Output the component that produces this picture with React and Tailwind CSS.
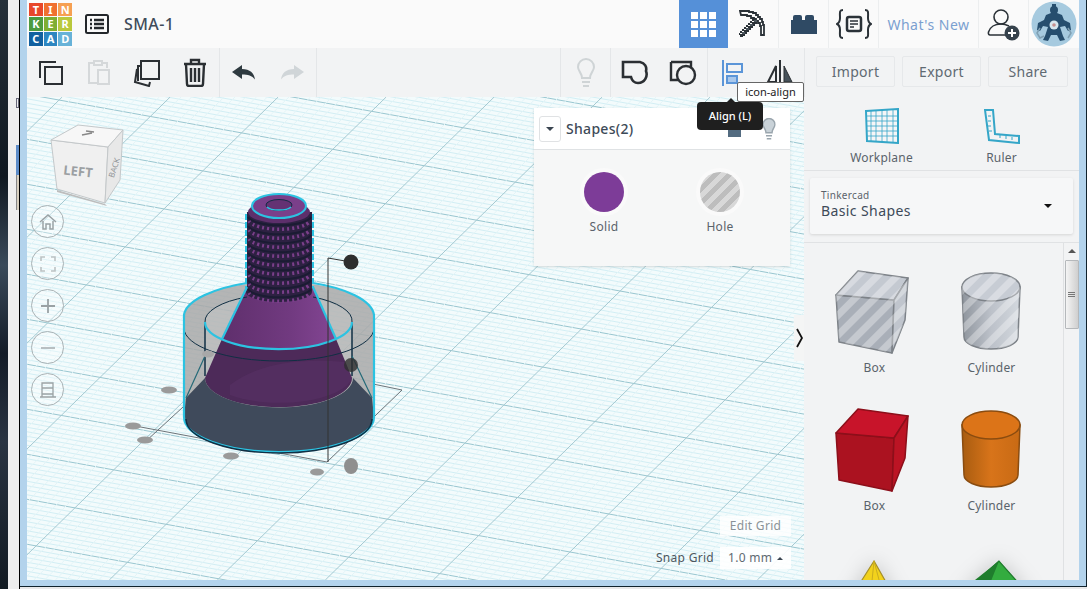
import React from 'react';

const range = (a, b) => Array.from({ length: b - a + 1 }, (_, i) => a + i);

const LOGO = [
      ['T', 'bg-[#e8472a]'], ['I', 'bg-[#f0702f]'], ['N', 'bg-[#f6a052]'],
      ['K', 'bg-[#4c9a3f]'], ['E', 'bg-[#7fae33]'], ['R', 'bg-[#b9c83c]'],
      ['C', 'bg-[#12609f]'], ['A', 'bg-[#2d86c1]'], ['D', 'bg-[#67b2d8]'],
];

const Logo = () => (
      <div className="grid grid-cols-3 gap-[1px] w-[43px] h-[43px] ml-[2px]">
            {LOGO.map(([l, c]) => (
                  <div key={l} className={`${c} flex items-center justify-center text-white text-[11px] font-bold leading-none`}>{l}</div>
            ))}
      </div>
);

const Tool = ({ children, className = 'w-12' }) => (
      <div className={`${className} h-full flex items-center justify-center shrink-0`}>{children}</div>
);

const stroke = { fill: 'none', stroke: '#2b2f33', strokeWidth: 2 };

const CopyIcon = () => (
      <svg width="26" height="26" viewBox="0 0 26 26"><path {...stroke} d="M2 18V2h16M7 7h17v17H7z" /></svg>
);
const PasteIcon = () => (
      <svg width="24" height="28" viewBox="0 0 24 28"><g fill="none" stroke="#d5d8da" strokeWidth="2"><path d="M7 4H2v20h8M15 4h5v5M7 2h8v4H7zM11 11h11v14H11z" /></g></svg>
);
const DupIcon = () => (
      <svg width="28" height="28" viewBox="0 0 28 28"><path {...stroke} d="M8 2h18v18H8z" /><path {...stroke} d="M8 7H5v15M4 10l-2 13 14 4 1-4" /></svg>
);
const TrashIcon = () => (
      <svg width="24" height="29" viewBox="0 0 24 29"><path fill="none" stroke="#2b2f33" strokeWidth="2.4" d="M1 6h22M8 5V2h8v3M3 6l1 20q0 2 2 2h12q2 0 2-2l1-20M8 10v14M12 10v14M16 10v14" /></svg>
);
const UndoIcon = ({ c = '#2f3a40', flip }) => (
      <svg width="24" height="16" viewBox="0 0 24 16" className={flip ? '-scale-x-100' : ''}><path fill={c} d="M10 0L0 7l10 7V9.500c6 0 10 1 13 5 -1-7-5-10-13-10.500z" /></svg>
);
const Bulb = ({ c = '#cfd4d6', fill = 'none' }) => (
      <svg width="18" height="30" viewBox="0 0 18 30"><path fill={fill} stroke={c} strokeWidth="2" d="M9 1a8 8 0 0 0-8 8c0 4 4 6 4 11h8c0-5 4-7 4-11a8 8 0 0 0-8-8z" /><path stroke={c} strokeWidth="2" d="M5 24h8M6 28h6" /></svg>
);
const GroupIcon = () => (
      <svg width="28" height="26" viewBox="0 0 28 26"><path fill="none" stroke="#2b2f33" strokeWidth="2.600" d="M2 2h17c5 1 7 5 6 9 2 5-1 12-8 12-4 0-6-2-7-6H2z" /></svg>
);
const HoleIcon = () => (
      <svg width="28" height="26" viewBox="0 0 28 26"><path fill="none" stroke="#2b2f33" strokeWidth="2.400" d="M2 2h20v6M2 2v18h7" /><circle cx="17" cy="15" r="9" fill="none" stroke="#2b2f33" strokeWidth="2.400" /></svg>
);
const AlignIcon = () => (
      <svg width="22" height="26" viewBox="0 0 22 26"><g fill="none" stroke="#5b95d8" strokeWidth="2"><path d="M2 0v26M6 4h15v8H6zM6 16h10v7H6z" /></g><path fill="#a9c8ec" d="M7 17h8v5H7z" /></svg>
);
const FlipIcon = () => (
      <svg width="28" height="24" viewBox="0 0 28 24" className="-mt-[2px]"><path fill="#2b2f33" d="M13 0h2v24h-2z" /><path fill="none" stroke="#2b2f33" strokeWidth="2" d="M10 6v16H2z" /><path fill="#47525a" stroke="#2b2f33" strokeWidth="1" d="M18 6v16h8z" /></svg>
);
const ListIcon = () => (
      <svg width="24" height="20" viewBox="0 0 24 20"><rect x="1" y="1" width="22" height="18" rx="1.500" fill="none" stroke="#23272b" strokeWidth="2" /><path stroke="#23272b" strokeWidth="2.400" d="M5 6h2M9 6h10M5 10h2M9 10h10M5 14h2M9 14h10" /></svg>
);
const GridIcon = () => (
      <svg width="25" height="25" viewBox="0 0 25 25"><path fill="#fff" d="M0 0h7v7H0zM9 0h7v7H9zM18 0h7v7h-7zM0 9h7v7H0zM9 9h7v7H9zM18 9h7v7h-7zM0 18h7v7H0zM9 18h7v7H9zM18 18h7v7h-7z" /></svg>
);
const PickIcon = () => (
      <svg width="28" height="30" viewBox="0 0 28 30">
            <path fill="none" stroke="#2b3238" strokeWidth="1.800" d="M1 2h9v1h4v1h3v2h2v2h2v2h2v3h1v3h1v10h-3v-9h-1v-3h-2v-2h-2v-2h-2v-1h-3v-2h-4v-1h-6z" />
            {range(0, 7).map(i => (
                  <rect key={i} x={15 - i * 2} y={11 + i * 2} width="3" height="3" fill={i % 2 ? '#2b3238' : '#4a545c'} />
            ))}
            {range(0, 7).map(i => (
                  <rect key={i} x={13 - i * 2} y={10 + i * 2} width="2" height="2" fill="#2b3238" />
            ))}
            {range(0, 6).map(i => (
                  <rect key={i} x={16 - i * 2} y={13 + i * 2} width="2" height="2" fill="#2b3238" />
            ))}
      </svg>
);
const BrickIcon = () => (
      <svg width="26" height="20" viewBox="0 0 26 20"><path fill="#2f4a64" d="M0 20V6h2V3q0-2 2-2h5q2 0 2 2v3h3V3q0-2 2-2h5q2 0 2 2v3h3v14z" /></svg>
);
const CodeIcon = () => (
      <svg width="36" height="30" viewBox="0 0 36 30"><g fill="none" stroke="#2b3238" strokeWidth="2"><path d="M7 1C3 1 4 4 4 9c0 4-1 5-3 6 2 1 3 2 3 6 0 5-1 8 3 8M29 1c4 0 3 3 3 8 0 4 1 5 3 6-2 1-3 2-3 6 0 5 1 8-3 8" /><rect x="11" y="8" width="14" height="14" rx="2" strokeWidth="2.500" /></g><path stroke="#2b3238" strokeWidth="1.600" d="M14 12h8M14 15h8M14 18h4" /></svg>
);
const UserAdd = () => (
      <svg width="34" height="34" viewBox="0 0 34 34"><g fill="none" stroke="#2b3238" strokeWidth="1.600"><circle cx="14" cy="10" r="7" /><path d="M20 28H3c-1 0-2-1-1.500-3C3 20 8 17 14 17c3 0 6 1 8 2" /></g><circle cx="25" cy="26" r="7.500" fill="#36424c" /><path stroke="#fff" strokeWidth="2" d="M25 22v8M21 26h8" /></svg>
);
const Avatar = () => (
      <svg width="46" height="46" viewBox="0 0 46 46">
            <circle cx="23" cy="23" r="22.500" fill="#a6cadf" />
            <g fill="#264e6e">
                  <circle cx="23" cy="9" r="4" />
                  <path d="M21 3h4v4h-4zM15 14l5-2h6l5 2 2 5 6 3 1 7-3 1-3-5-5 1 3 9 2 4-5 1-3-6h-6l-3 6-5-1 2-4 3-9-5-1-3 5-3-1 1-7 6-3z" />
            </g>
            <path d="M9 27l-3 5 3 5 4-2M37 27l3 5-3 5" fill="none" stroke="#7f9fb2" strokeWidth="1.500" />
            <circle cx="23" cy="24" r="4.500" fill="#d7e6ee" />
            <circle cx="23" cy="24" r="1.800" fill="#c58f8f" />
      </svg>
);

const Grid3d = () => (
      <g strokeWidth="1">
            {range(-70, 110).map(k => (
                  <line key={k} x1="27" x2="804" y1={300 + 0.18 * (27 - 420) + k * 4.5} y2={300 + 0.18 * (804 - 420) + k * 4.5}
                        stroke={k % 10 === 0 ? '#98c6d0' : '#d2eef4'} />
            ))}
            {range(-60, 90).map(k => (
                  <line key={k} x1={452 + 253 / 0.98 + k * 10.8} y1="97" x2={452 - 230 / 0.98 + k * 10.8} y2="580"
                        stroke={k % 10 === 0 ? '#a5c9d1' : '#e3f4f7'} />
            ))}
      </g>
);

const Cube = () => (
      <g>
            <path d="M57 190l48 14 2 2-50-14z" fill="#bdbdbd" />
            <path d="M51 140l57 7-3 56-48-14z" fill="#f0f0f0" stroke="#c4c8ca" />
            <path d="M51 140l27-15 45 5-15 17z" fill="#f7f7f7" stroke="#c4c8ca" />
            <path d="M108 147l15-17-3 50-15 23z" fill="#e8e8e8" stroke="#c4c8ca" />
            <text x="78" y="176" textAnchor="middle" fontSize="13" fontWeight="700" fill="#9b9fa2" transform="rotate(6 78 172)">LEFT</text>
            <text x="115" y="170" textAnchor="middle" fontSize="8" fill="#8f9396" transform="rotate(-72 115 168)">BACK</text>
            <path d="M82 135l10-2M86 131l8 1" stroke="#888" strokeWidth="1.500" />
      </g>
);

const Model = () => (
      <g>
            <defs>
                  <linearGradient id="cone" x1="0" x2="1" y1="0" y2="0">
                        <stop offset="0" stopColor="#5f2f6c" /><stop offset="0.6" stopColor="#713a80" /><stop offset="1" stopColor="#844694" />
                  </linearGradient>
            </defs>
            {/* bounding box and handles */}
            <path d="M130 425L327 462L402 390L373 384M145 442L183 407" fill="none" stroke="#6b7378" strokeWidth="1" />
            {[[169, 390, 8, 3.500], [133, 426, 8, 3.500], [145, 440, 8, 3.500], [231, 456, 8, 3.500], [317, 472, 7, 3.500]].map(([x, y, a, b]) => (
                  <ellipse key={x} cx={x} cy={y} rx={a} ry={b} fill="#9a9a9a" />
            ))}
            <ellipse cx="351" cy="466" rx="7" ry="8" fill="#8f8f8f" />

            <path d="M184 315A95 33 0 0 1 374 315L374 417A95 35 0 0 1 184 417Z" fill="#a8a8a8" fillOpacity="0.85" />
            <path d="M205 322A73 27 0 0 1 352 322L352 375A73 27 0 0 1 205 375Z" fill="#d7dcdd" fillOpacity="0.25" />
            <path d="M247 287L313 287L336 339L222 339Z" fill="url(#cone)" />
            <path d="M222 339A73 27 0 0 0 336 339Z" fill="url(#cone)" />
            <path d="M222 339A73 27 0 0 0 336 339L352 378A73 29 0 0 1 205 378Z" fill="#4d2a59" />
            <path d="M230 385Q270 355 345 362L352 378A73 29 0 0 1 230 395Z" fill="#5a3166" fillOpacity="0.55" />
            <path d="M186 398L205 378A73 29 0 0 0 353 378L372 398L374 417A95 35 0 0 1 184 417Z" fill="#3f4a5b" />

            <ellipse cx="279" cy="292" rx="33" ry="10" fill="#2d2142" />
            <rect x="247" y="212" width="65" height="80" fill="#2d2142" />
            {range(0, 8).map(i => (
                  <g key={i} fill="none">
                        <path d={`M248 ${217 + i * 9}A32 10 0 0 0 311 ${217 + i * 9}`} stroke="#1b1c33" strokeWidth="2" />
                        <path d={`M249 ${221 + i * 9}A31 10 0 0 0 310 ${221 + i * 9}`} stroke="#7a3f8a" strokeWidth="3.500" strokeDasharray="2 3" />
                  </g>
            ))}
            <path d="M246 214V288M313 214V288" stroke="#2cc3e2" strokeWidth="2" strokeDasharray="6 2" />
            <ellipse cx="279" cy="212" rx="31" ry="11" fill="#5d2f6b" />
            <ellipse cx="279" cy="206" rx="27" ry="12" fill="#7a3f8a" stroke="#2cc3e2" strokeWidth="2" />
            <ellipse cx="279" cy="205" rx="13" ry="5.500" fill="#643273" stroke="#132b45" strokeWidth="1" />
            <path d="M267 207A13 5 0 0 0 291 207" fill="none" stroke="#2cc3e2" strokeWidth="1.500" />

            {/* thin edges */}
            <g fill="none" stroke="#102f44" strokeWidth="1">
                  <path d="M205 322A73 27 0 0 1 247 297M313 297A73 27 0 0 1 352 322" />
                  <path d="M205 322V376M352 322V376" strokeWidth="1.500" />
                  <path d="M184 328A95 33 0 0 0 374 328" />
            </g>
            {/* selection outline */}
            <g fill="none" stroke="#2cc3e2" strokeWidth="2.200">
                  <path d="M184 417V315C186 300 215 288 247 283M313 283C345 288 372 300 374 315V417A95 35 0 0 1 184 417" />
                  <path d="M205 322A73 27 0 0 0 352 322" />
                  <path d="M247 287L222 339M313 287L336 339" />
                  <path d="M186 398L205 356M372 398L352 356" stroke="#256a78" strokeWidth="1.200" />
            </g>
            <path d="M186 419A93 34 0 0 0 372 419" fill="none" stroke="#102f44" strokeWidth="1.500" />

            {/* rotate handles */}
            <path d="M351 262L328 258V462" fill="none" stroke="#333" strokeWidth="1" />
            <circle cx="351" cy="262" r="7.500" fill="#2e2e2e" />
            <circle cx="351" cy="365" r="7" fill="#2e2e2e" fillOpacity="0.8" />
            <ellipse cx="208" cy="354" rx="6" ry="3.500" fill="#a8a8a8" />
      </g>
);

const Viewport = () => (
      <svg className="absolute inset-0 w-full h-full" viewBox="27 97 777 483">
            <rect x="27" y="97" width="777" height="483" fill="#f3fbfc" />
            <Grid3d />
            <Cube />
            <Model />
      </svg>
);

const NavBtn = ({ children }) => (
      <div className="w-[33px] h-[33px] rounded-full border border-[#a9b2b5] bg-white/30 flex items-center justify-center">{children}</div>
);

const NavIcons = () => (
      <div className="absolute left-[4px] top-[108px] flex flex-col gap-[9px]">
            <NavBtn>
                  <svg width="18" height="18" viewBox="0 0 18 18"><path fill="none" stroke="#9aa2a5" strokeWidth="1.500" d="M1 9l8-7 8 7M4 8v8h3v-5h4v5h3V8" /></svg>
            </NavBtn>
            <NavBtn>
                  <svg width="16" height="16" viewBox="0 0 16 16"><path fill="none" stroke="#bcc2c4" strokeWidth="1.600" d="M1 5V1h4M11 1h4v4M15 11v4h-4M5 15H1v-4" /></svg>
            </NavBtn>
            <NavBtn>
                  <svg width="14" height="14" viewBox="0 0 14 14"><path stroke="#9aa2a5" strokeWidth="1.800" d="M7 0v14M0 7h14" /></svg>
            </NavBtn>
            <NavBtn>
                  <svg width="14" height="14" viewBox="0 0 14 14"><path stroke="#b2b8bb" strokeWidth="1.800" d="M0 7h14" /></svg>
            </NavBtn>
            <NavBtn>
                  <svg width="16" height="18" viewBox="0 0 16 18"><path fill="none" stroke="#9aa2a5" strokeWidth="1.300" d="M2 2h11v11H2zM2 7h11M0 16h16M2 13v3M13 13v3" /></svg>
            </NavBtn>
      </div>
);

const ShapesPanel = () => (
      <div className="absolute left-[507px] top-[11px] w-[256px] h-[158px] bg-[#f6f7f7] shadow-sm">
            <div className="h-[42px] bg-white border-b border-[#dfe2e4] flex items-center pl-[5px]">
                  <div className="w-[22px] h-[26px] shrink-0 border border-[#e0e2e4] rounded-[3px] flex items-center justify-center">
                        <div className="w-0 h-0 border-x-[4px] border-x-transparent border-t-[4px] border-t-[#3a4550]" />
                  </div>
                  <span className="ml-[5px] text-[14px] font-medium text-[#3d4a58] tracking-[0.3px]">Shapes(2)</span>
                  <div className="ml-auto mr-[12px] flex items-center gap-[19px] mt-[4px]">
                        <div className="w-[13px] h-[13px] bg-[#536b80] shrink-0" />
                        <div className="shrink-0 scale-75 -mt-[4px]"><Bulb c="#9aa5ad" fill="#c9d2d8" /></div>
                  </div>
            </div>
            <div className="flex pt-[22px]">
                  <div className="w-[140px] flex flex-col items-center">
                        <div className="w-[40px] h-[40px] rounded-full bg-[#7d3c98] ring-4 ring-[#fafafa]" />
                        <span className="mt-[7px] text-[12px] leading-[16px] text-[#5a636b] tracking-[0.3px]">Solid</span>
                  </div>
                  <div className="w-[92px] flex flex-col items-center">
                        <div className="w-[40px] h-[40px] rounded-full ring-4 ring-[#fafafa] bg-[repeating-linear-gradient(135deg,#bdbdbd_0,#bdbdbd_5px,#d8d8d8_5px,#d8d8d8_10px)]" />
                        <span className="mt-[7px] text-[12px] leading-[16px] text-[#5a636b] tracking-[0.3px]">Hole</span>
                  </div>
            </div>
      </div>
);

const GridControls = () => (
      <div className="absolute left-[564px] top-[419px] w-[200px] flex flex-col items-end gap-[11px] text-[12px] text-[#5f6a72] tracking-[0.3px] whitespace-nowrap">
            <div className="w-[71px] h-[20px] bg-white/80 flex items-center justify-center text-[#8a9297]">Edit Grid</div>
            <div className="flex items-center">
                  <span className="mr-[6px] text-[#4d575e]">Snap Grid</span>
                  <div className="w-[71px] h-[22px] bg-white/90 flex items-center pl-[8px] text-[#5f6a72]">
                        1.0 mm
                        <div className="ml-[5px] w-0 h-0 border-x-[3px] border-x-transparent border-b-[3px] border-b-[#3a4550]" />
                  </div>
            </div>
      </div>
);

const ImportBtn = ({ label, w }) => (
      <div className={`${w} h-[31px] border border-[#e6e8ea] rounded-[2px] flex items-center justify-center text-[14px] text-[#5f6a72] tracking-[0.3px]`}>{label}</div>
);

const BoxShape = ({ top, front, side, edge, pattern }) => (
      <svg width="117" height="96" viewBox="816 265 117 96">
            <path d="M836 295l58 5-2 53-53-11z" fill={front} stroke={edge} strokeWidth="1.500" strokeLinejoin="round" />
            <path d="M836 295l22-24 50 7-14 22z" fill={top} stroke={edge} strokeWidth="1.500" strokeLinejoin="round" />
            <path d="M894 300l14-22-3 42-13 33z" fill={side} stroke={edge} strokeWidth="1.500" strokeLinejoin="round" />
            {pattern && <path d="M836 295l58 5-2 53-53-11zM836 295l22-24 50 7-14 22zM894 300l14-22-3 42-13 33z" fill="url(#hatch)" />}
      </svg>
);

const CylShape = ({ top, body, edge, pattern }) => (
      <svg width="117" height="96" viewBox="933 265 117 96">
            <defs>
                  <linearGradient id={`cyl${pattern ? 'g' : 'o'}`} x1="0" x2="1" y1="0" y2="0">
                        <stop offset="0" stopColor={body[0]} /><stop offset="0.5" stopColor={body[1]} /><stop offset="1" stopColor={body[2]} />
                  </linearGradient>
            </defs>
            <path d="M962 287L964 337A27 12 0 0 0 1018 337L1020 287Z" fill={`url(#cyl${pattern ? 'g' : 'o'})`} stroke={edge} strokeWidth="1.500" />
            <ellipse cx="991" cy="287" rx="29" ry="14" fill={top} stroke={edge} strokeWidth="1.500" />
            {pattern && <path d="M962 287L964 337A27 12 0 0 0 1018 337L1020 287A29 14 0 0 0 962 287Z" fill="url(#hatch)" />}
      </svg>
);

const Item = ({ label, children }) => (
      <div className="h-[138px] flex flex-col items-center">
            {children}
            <span className="text-[12px] leading-[14px] text-[#5a636b] tracking-[0.2px]">{label}</span>
      </div>
);

const Library = () => (
      <div className="flex-1 min-h-0 flex">
            <div className="flex-1 overflow-hidden pl-[12px] pt-[22px]">
                  <svg width="0" height="0" className="absolute">
                        <defs>
                              <pattern id="hatch" width="14" height="14" patternUnits="userSpaceOnUse" patternTransform="rotate(45)">
                                    <rect width="7" height="14" fill="#ffffff" fillOpacity="0.32" />
                              </pattern>
                        </defs>
                  </svg>
                  <div className="grid grid-cols-[117px_117px]">
                        <Item label="Box"><BoxShape top="#c4c9d1" front="#a9afb8" side="#c0c5cd" edge="#7d8288" pattern /></Item>
                        <Item label="Cylinder"><CylShape top="#c7ccd4" body={['#8f959d', '#bcc1c9', '#d3d8de']} edge="#7d8288" pattern /></Item>
                        <Item label="Box"><BoxShape top="#c8142a" front="#ab1220" side="#bc1424" edge="#8c0f1a" /></Item>
                        <Item label="Cylinder"><CylShape top="#dc7418" body={['#a85c10', '#d8741a', '#c86a14']} edge="#8a4c10" /></Item>
                        <div className="h-[96px] drop-shadow-[0_0_10px_rgba(0,0,0,0.18)]">
                              <svg width="117" height="96" viewBox="816 265 117 96">
                                    <path d="M874 285L836 345L908 345Z" fill="#f2d21c" stroke="#a58f28" strokeWidth="1.200" />
                                    <path d="M874 285L868 345M874 285L890 345" stroke="#c9ad20" strokeWidth="1" />
                              </svg>
                        </div>
                        <div className="h-[96px] drop-shadow-[0_0_10px_rgba(0,0,0,0.18)]">
                              <svg width="117" height="96" viewBox="933 265 117 96">
                                    <path d="M999 285L960 320L1030 320Z" fill="#33ac3f" stroke="#1d7a2b" strokeWidth="1.200" />
                                    <path d="M999 285L975 304L985 320Z" fill="#1f7d2d" />
                              </svg>
                        </div>
                  </div>
            </div>
            <div className="w-[16px] shrink-0 border-l border-[#dfe1e3] bg-[#f2f3f4] flex flex-col items-center pt-[6px]">
                  <div className="w-0 h-0 border-x-[4px] border-x-transparent border-b-[4px] border-b-[#555]" />
                  <div className="mt-[7px] w-[14px] h-[69px] border border-[#b5b8bb] rounded-[1px] bg-gradient-to-r from-[#f4f4f4] to-[#cfcfcf] flex flex-col items-center justify-center gap-[1px]">
                        <div className="w-[7px] h-[1px] bg-[#777]" /><div className="w-[7px] h-[1px] bg-[#777]" /><div className="w-[7px] h-[1px] bg-[#777]" />
                  </div>
            </div>
      </div>
);

const RightPanel = () => (
      <div className="w-[275px] shrink-0 bg-[#f2f3f4] flex flex-col relative">
            <div className="absolute -left-[10px] top-[218px] w-[10px] h-[46px] bg-[#f4f5f5] flex items-center justify-center text-[#111]">
                  <svg width="7" height="20" viewBox="0 0 7 20"><path d="M1 1l5 9-5 9" fill="none" stroke="#111" strokeWidth="1.800" /></svg>
            </div>
            <div className="h-[74px] border-b border-[#e0e2e4] flex text-[12px] text-[#5a636b] tracking-[0.2px] shrink-0">
                  <div className="w-[155px] flex flex-col items-center pt-[11px]">
                        <svg width="36" height="36" viewBox="0 0 36 36"><path fill="#fff" fillOpacity="0.3" stroke="#35a6c8" strokeWidth="2" d="M2 3l32-2v34L3 33z" /><path stroke="#35a6c8" strokeWidth="0.800" fill="none" d="M7 3v30M12 3v30M18 2v31M23 2v32M29 2v33M2 8h32M2 13h32M3 18h31M3 23h31M3 28h31" /></svg>
                        <span className="mt-[5px]">Workplane</span>
                  </div>
                  <div className="w-[85px] flex flex-col items-center pt-[11px]">
                        <svg width="36" height="36" viewBox="0 0 36 36"><path fill="#f2f3f4" stroke="#35a6c8" strokeWidth="2" d="M1 2h8l2 24 24 2v7l-30-3z" /><path stroke="#35a6c8" strokeWidth="1" d="M4 8h3M4 13h3M4 18h3M5 23h3M16 30v-3M22 31v-3M28 32v-3" /></svg>
                        <span className="mt-[5px]">Ruler</span>
                  </div>
            </div>
            <div className="mx-[6px] mt-[7px] h-[56px] bg-[#f6f7f8] shadow-[0_1px_3px_rgba(0,0,0,0.12)] rounded-[2px] flex items-center justify-between pl-[11px] pr-[21px] shrink-0">
                  <div className="flex flex-col pb-[3px]">
                        <span className="text-[10px] leading-[12px] text-[#5a636b] tracking-[0.3px]">Tinkercad</span>
                        <span className="text-[14px] leading-[20px] text-[#3d4a58] tracking-[0.4px]">Basic Shapes</span>
                  </div>
                  <div className="w-0 h-0 border-x-[4px] border-x-transparent border-t-[4px] border-t-[#111]" />
            </div>
            <div className="mt-[8px] border-t border-[#e0e2e4]" />
            <Library />
      </div>
);

const TopBar = () => (
      <div className="h-12 bg-[#fafafa] flex items-center shrink-0">
            <Logo />
            <div className="ml-[13px]"><ListIcon /></div>
            <span className="ml-[15px] text-[16px] font-medium text-[#3f4b59] tracking-[0.4px]">SMA-1</span>
            <div className="ml-auto h-full flex items-center">
                  <Tool className="w-[49px] bg-[#5590d8]"><GridIcon /></Tool>
                  <Tool className="w-[50px]"><PickIcon /></Tool>
                  <Tool className="w-[50px] border-l border-[#eceeef]"><BrickIcon /></Tool>
                  <Tool className="w-[50px] border-l border-[#eceeef]"><CodeIcon /></Tool>
                  <Tool className="w-[101px] border-x border-[#eceeef] text-[14px] text-[#7ba0d0] tracking-[0.5px]">What's New</Tool>
                  <Tool className="w-[50px] border-r border-[#eceeef]"><UserAdd /></Tool>
                  <Tool className="w-[50px]"><Avatar /></Tool>
            </div>
      </div>
);

const Toolbar = () => (
      <div className="h-[49px] bg-[#f2f3f4] flex items-center shrink-0">
            <div className="h-full flex items-center border-r border-[#e4e6e8]">
                  <Tool><CopyIcon /></Tool>
                  <Tool><PasteIcon /></Tool>
                  <Tool><DupIcon /></Tool>
                  <Tool><TrashIcon /></Tool>
            </div>
            <div className="h-full flex items-center border-r border-[#e4e6e8]">
                  <Tool><UndoIcon /></Tool>
                  <Tool><UndoIcon c="#d0d5d8" flip /></Tool>
            </div>
            <div className="ml-auto h-full flex items-center">
                  <Tool className="w-[50px] border-l border-[#e4e6e8]"><Bulb /></Tool>
                  <div className="h-full flex border-l border-[#e4e6e8]">
                        <Tool><GroupIcon /></Tool>
                        <Tool><HoleIcon /></Tool>
                  </div>
                  <div className="h-full flex border-l border-[#e4e6e8]">
                        <Tool><AlignIcon /></Tool>
                        <Tool><FlipIcon /></Tool>
                  </div>
                  <div className="w-[275px] h-full flex items-center gap-[7px] border-l border-[#e4e6e8] pl-[11px] pb-[3px]">
                        <ImportBtn label="Import" w="w-[79px]" />
                        <ImportBtn label="Export" w="w-[79px]" />
                        <ImportBtn label="Share" w="w-[80px]" />
                  </div>
            </div>
      </div>
);

const DesktopStrip = () => (
      <div className="w-[20px] shrink-0 border-r border-black flex">
            <div className="w-[8px] bg-[linear-gradient(180deg,#26303a,#101820_30%,#3a4a5a_45%,#141c28_60%,#2a3442_75%,#121a22)]" />
            <div className="flex-1 bg-[#eeeeee] flex flex-col items-end">
                  <div className="mt-[98px] w-[3px] h-[10px] border border-[#667]" />
                  <div className="mt-[37px] w-[3px] h-[30px] bg-[#5d8cc8]" />
                  <div className="w-[3px] h-[35px] bg-[#d8d0c0] border-l border-[#888]" />
            </div>
      </div>
);

export default function App() {
      return (
            <div className="relative w-[1087px] h-[589px] overflow-hidden flex bg-[#e9e9e9] font-['Noto_Sans','Open_Sans',sans-serif]">
                  <DesktopStrip />
                  <div className="flex-1 min-w-0 flex flex-col">
                        <div className="h-[587px] bg-[#b3d3ec] border-r border-b border-[#10222c] shrink-0 flex flex-col">
                              <div className="ml-[7px] w-[1052px] h-[580px] flex flex-col shrink-0">
                                    <TopBar />
                                    <Toolbar />
                                    <div className="flex-1 min-h-0 flex">
                                          <div className="relative flex-1 min-w-0 overflow-hidden">
                                                <Viewport />
                                                <NavIcons />
                                                <ShapesPanel />
                                                <GridControls />
                                          </div>
                                          <RightPanel />
                                    </div>
                              </div>
                        </div>
                  </div>
                  {/* hover tooltips */}
                  <div className="absolute left-[697px] top-[102px] w-[66px] h-[28px] bg-[#1f1f1f] rounded-[4px] flex items-center justify-center text-white text-[11px] font-medium">
                        Align (L)
                        <div className="absolute -top-[4px] left-[30px] w-0 h-0 border-x-[4px] border-x-transparent border-b-[4px] border-b-[#1f1f1f]" />
                  </div>
                  <div className="absolute left-[737px] top-[82px] w-[67px] h-[20px] bg-white border border-[#666] rounded-[2px] flex items-center justify-center text-[#222] text-[11px]">icon-align</div>
            </div>
      );
}
